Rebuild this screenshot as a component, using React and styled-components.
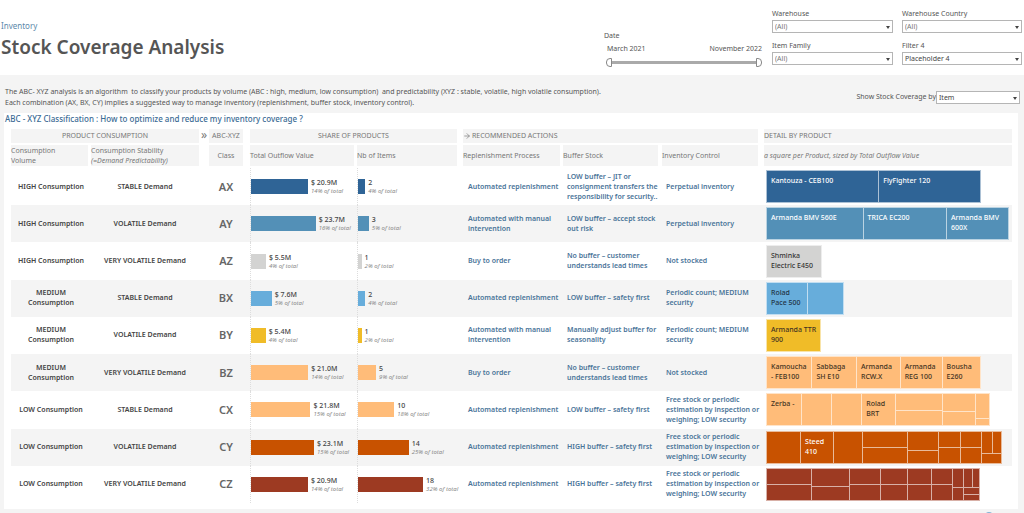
import React, { useState } from "react";
import styled, { createGlobalStyle } from "styled-components";
import { ArrowRight } from "lucide-react";

const GlobalStyle = createGlobalStyle`
  *, *::before, *::after { box-sizing: border-box; }
  body {
    margin: 0;
    background: #f4f4f4;
    color: #555;
    font-family: "Noto Sans", "Open Sans", sans-serif;
    font-size: 7px;
    line-height: 10px;
  }
`;

const Header = styled.header`
  display: flex;
  justify-content: space-between;
  height: 75px;
  padding-right: 2px;
  background: #fff;
`;

const Heading = styled.div`
  padding: 20px 0 0 1px;
`;

const Section = styled.a`
  display: block;
  color: #5c89aa;
  font-size: 8px;
  line-height: 12px;
  text-decoration: none;
`;

const Title = styled.h1`
  margin: 3px 0 0;
  color: #555;
  font-size: 19px;
  font-weight: 600;
  line-height: 24px;
  white-space: nowrap;
`;

const Filters = styled.div`
  display: flex;
  gap: 10px;
`;

const DateRange = styled.fieldset`
  width: 158px;
  margin: 0;
  padding: 30px 0 0;
  border: 0;
`;

const Legend = styled.div`
  line-height: 12px;
`;

const RangeEnds = styled.div`
  display: flex;
  justify-content: space-between;
  padding: 1px 0 0 3px;
  line-height: 12px;
`;

const Slider = styled.div`
  position: relative;
  height: 9px;
  margin: 3px 0 0 2px;
  background: linear-gradient(#aaa, #aaa) center / 144px 3px no-repeat;
`;

const Handle = styled.input`
  position: absolute;
  inset: 0;
  width: 100%;
  height: 9px;
  margin: 0;
  appearance: none;
  background: none;
  pointer-events: none;
  &::-webkit-slider-thumb {
    appearance: none;
    width: 6px;
    height: 9px;
    border: 1px solid #888;
    border-radius: ${(p) => (p.$side === "start" ? "4px 0 0 4px" : "0 4px 4px 0")};
    background: #fff;
    pointer-events: auto;
  }
`;

const FilterGrid = styled.div`
  display: grid;
  grid-template-columns: 121px 120px;
  gap: 7px 9px;
  align-content: start;
  padding-top: 8px;
`;

const Field = styled.label`
  display: flex;
  flex-direction: ${(p) => (p.$inline ? "row" : "column")};
  align-items: ${(p) => (p.$inline ? "center" : "stretch")};
  line-height: 12px;
  white-space: nowrap;
`;

const SelectBox = styled.span`
  position: relative;
  display: block;
  width: ${(p) => p.$width || "100%"};
  &::after {
    content: "";
    position: absolute;
    top: 6px;
    right: 3px;
    border: 2px solid transparent;
    border-top: 3px solid #444;
    border-bottom: 0;
    pointer-events: none;
  }
`;

const Select = styled.select`
  display: block;
  width: 100%;
  height: 13px;
  padding: 0 2px;
  appearance: none;
  border: 1px solid #b5b5b5;
  border-radius: 0;
  background: #fff;
  color: ${(p) => (p.$muted ? "#777" : "#444")};
  font: inherit;
  line-height: 11px;
`;

const Intro = styled.section`
  display: flex;
  justify-content: space-between;
  align-items: center;
  height: 38px;
  padding: 6px 4px 0 5px;
`;

const IntroText = styled.p`
  margin: 0;
  line-height: 11px;
`;

const Panel = styled.main`
  margin: 0 6px 0 4px;
  padding: 0 6px 6px 7px;
  background: #fff;
`;

const PanelTitle = styled.h2`
  margin: 0 0 0 -6px;
  color: #3c6c95;
  font-size: 8px;
  font-weight: 500;
  line-height: 12px;
  padding-bottom: 4px;
`;

const Table = styled.table`
  width: 100%;
  height: 374px;
  table-layout: fixed;
  border-collapse: separate;
  border-spacing: 0;
`;

const HeadCell = styled.th`
  height: ${(p) => (p.$group ? 16 : 23)}px;
  padding: 0;
  border: 0 solid #fff;
  border-bottom-width: 2px;
  border-right-width: ${(p) => p.$gap || 0}px;
  background: ${(p) => (p.$blank ? "#fff" : "#f4f4f4")};
  color: #777;
  font-weight: 400;
  text-align: ${(p) => p.$align || "left"};
  white-space: nowrap;
`;

const Chevrons = styled.span`
  font-size: 12px;
`;

const WithIcon = styled.span`
  display: flex;
  align-items: center;
  gap: 1px;
`;

const Row = styled.tr`
  background: ${(p) => (p.$striped ? "#f4f4f4" : "#fff")};
`;

const Cell = styled.td`
  padding: 0 0 0 ${(p) => p.$indent || 0}px;
  color: #444;
  font-weight: 600;
  text-align: ${(p) => p.$align || "left"};
`;

const ActionCell = styled(Cell)`
  color: #4a7499;
  white-space: nowrap;
`;

const ClassCell = styled.th`
  padding: 0 7px 0 0;
  color: #666;
  font-size: 11px;
  font-weight: 600;
`;

const BarCell = styled.td`
  height: 1px;
  padding: 0;
`;

const BarTrack = styled.div`
  display: flex;
  align-items: center;
  gap: 3px;
  height: 100%;
  border-left: 1px dotted #ddd;
`;

const Bar = styled.div`
  flex: none;
  height: 15px;
  background: ${(p) => p.$color};
`;

const BarLabel = styled.div`
  color: #444;
  font-weight: 500;
  line-height: 9px;
  white-space: nowrap;
`;

const Share = styled.em`
  display: block;
  color: #888;
  font-size: 6px;
  font-weight: 400;
  line-height: 8px;
`;

const TreeMap = styled.div`
  display: flex;
  gap: 1px;
  height: 33px;
  padding: 1px;
  background: color-mix(in srgb, ${(p) => p.$color} 40%, white);
`;

const Group = styled.div`
  display: flex;
  flex-basis: 0;
  flex-direction: ${(p) => p.$dir};
  gap: 1px;
  min-width: 0;
  min-height: 0;
`;

const Tile = styled.div`
  flex-basis: 0;
  min-width: 0;
  min-height: 0;
  overflow: hidden;
  padding: ${(p) => (p.$labelled ? "5px 0 0 4px" : "0")};
  background: ${(p) => p.$color};
  color: ${(p) => p.$ink};
  font-weight: 500;
  white-space: pre;
`;

const Footer = styled.footer`
  display: flex;
  justify-content: flex-end;
  height: 4px;
  padding: 3px 30px 0 0;
  overflow: hidden;
`;

const leaf = (size, label) => ({ size, label });
const stack = (size, ...items) => ({ size, dir: "column", items });
const line = (size, ...items) => ({ size, dir: "row", items });
const halves = (size, top) => stack(size, leaf(top), leaf(100 - top));

const FREE = "Free stock or periodic\nestimation by inspection or\nweighing; LOW security";
const AUTO = "Automated replenishment";
const MANUAL = "Automated with manual\nintervention";
const NO_BUFFER = "No buffer – customer\nunderstands lead times";
const PERIODIC = "Periodic count; MEDIUM\nsecurity";

const ROWS = [
  { cls: "AX", vol: "HIGH Consumption", dem: "STABLE Demand", value: 20.9, vs: 14, items: 2, is: 4, color: "#2f6496", ink: "#fff",
    actions: [AUTO, "LOW buffer – JIT or\nconsignment transfers the\nresponsibility for security..", "Perpetual inventory"],
    tiles: [leaf(113, "Kantouza - CEB100"), leaf(102, "FlyFighter 120")] },
  { cls: "AY", vol: "HIGH Consumption", dem: "VOLATILE Demand", value: 23.7, vs: 16, items: 3, is: 5, color: "#5390b7", ink: "#fff",
    actions: [MANUAL, "LOW buffer – accept stock\nout risk", "Perpetual inventory"],
    tiles: [leaf(98, "Armanda BMV 560E"), leaf(84, "TRICA EC200"), leaf(61, "Armanda BMV\n600X")] },
  { cls: "AZ", vol: "HIGH Consumption", dem: "VERY VOLATILE Demand", value: 5.5, vs: 4, items: 1, is: 2, color: "#d3d3d2", ink: "#333",
    actions: ["Buy to order", NO_BUFFER, "Not stocked"],
    tiles: [leaf(56, "Shminka\nElectric E450")] },
  { cls: "BX", vol: "MEDIUM\nConsumption", dem: "STABLE Demand", value: 7.6, vs: 5, items: 2, is: 4, color: "#67addb", ink: "#234",
    actions: [AUTO, "LOW buffer – safety first", PERIODIC],
    tiles: [leaf(39, "Rolad\nPace 500"), leaf(39)] },
  { cls: "BY", vol: "MEDIUM\nConsumption", dem: "VOLATILE Demand", value: 5.4, vs: 4, items: 1, is: 2, color: "#f0bc28", ink: "#432",
    actions: [MANUAL, "Manually adjust buffer for\nseasonality", PERIODIC],
    tiles: [leaf(55, "Armanda TTR\n900")] },
  { cls: "BZ", vol: "MEDIUM\nConsumption", dem: "VERY VOLATILE Demand", value: 21.0, vs: 14, items: 5, is: 9, color: "#ffbc79", ink: "#432",
    actions: ["Buy to order", NO_BUFFER, "Not stocked"],
    tiles: [leaf(46, "Kamoucha\n- FEB100"), leaf(45, "Sabbaga\nSH E10"), leaf(44, "Armanda\nRCW.X"), leaf(42, "Armanda\nREG 100"), leaf(38, "Bousha\nE260")] },
  { cls: "CX", vol: "LOW Consumption", dem: "STABLE Demand", value: 21.8, vs: 15, items: 10, is: 18, color: "#ffbc79", ink: "#432",
    actions: [AUTO, "LOW buffer – safety first", FREE],
    tiles: [leaf(32, "Zerba -"), leaf(32), leaf(31), leaf(31, "Rolad\nBRT"), halves(50, 51), halves(34, 54), halves(14, 77)] },
  { cls: "CY", vol: "LOW Consumption", dem: "VOLATILE Demand", value: 23.1, vs: 15, items: 14, is: 25, color: "#c85200", ink: "#fff",
    actions: [AUTO, "HIGH buffer – safety first", FREE],
    tiles: [leaf(35), leaf(30, "Steed\n410"), leaf(29), halves(47, 51), halves(31, 61), halves(23, 51), halves(21, 51), stack(20, line(72, leaf(11), leaf(9)), leaf(28))] },
  { cls: "CZ", vol: "LOW Consumption", dem: "VERY VOLATILE Demand", value: 20.9, vs: 14, items: 18, is: 32, color: "#9d3a22", ink: "#fff",
    actions: [AUTO, "HIGH buffer – safety first", FREE],
    tiles: [halves(46, 51), halves(38, 57), halves(31, 51), halves(27, 51), halves(24, 51), halves(21, 51),
      stack(27, line(62, leaf(11), leaf(9), leaf(7)), line(38, leaf(11), stack(17, leaf(1), leaf(1))))] },
];

const COLUMNS = [80, 108, 10, 41, 107, 106, 100, 99, 102, 248];
const INDENTS = [5, 4, 4];

const Lines = ({ text }) =>
  text.split("\n").map((part, i) => (
    <React.Fragment key={i}>
      {i > 0 && <br />}
      {part}
    </React.Fragment>
  ));

function TreeNode({ node, color, ink }) {
  if (node.items) {
    return (
      <Group $dir={node.dir} style={{ flexGrow: node.size }}>
        {node.items.map((child, i) => (
          <TreeNode key={i} node={child} color={color} ink={ink} />
        ))}
      </Group>
    );
  }
  return (
    <Tile $color={color} $ink={ink} $labelled={!!node.label} style={{ flexGrow: node.size }}>
      {node.label}
    </Tile>
  );
}

function ShareBar({ width, color, label, share }) {
  return (
    <BarTrack>
      <Bar $color={color} style={{ width: `${width}%` }} />
      <BarLabel>
        {label}
        <Share>{share}% of total</Share>
      </BarLabel>
    </BarTrack>
  );
}

function Filter({ label, options, inline, width, muted }) {
  return (
    <Field $inline={inline}>
      {label}
      <SelectBox $width={width}>
        <Select $muted={muted}>
          {options.map((o) => (
            <option key={o}>{o}</option>
          ))}
        </Select>
      </SelectBox>
    </Field>
  );
}

export default function App() {
  const [from, setFrom] = useState(0);
  const [to, setTo] = useState(20);
  return (
    <>
      <GlobalStyle />
      <Header>
        <Heading>
          <Section href="#inventory">Inventory</Section>
          <Title>Stock Coverage Analysis</Title>
        </Heading>
        <Filters>
          <DateRange aria-label="Date">
            <Legend>Date</Legend>
            <RangeEnds>
              <span>March 2021</span>
              <span>November 2022</span>
            </RangeEnds>
            <Slider>
              <Handle type="range" aria-label="From" min="0" max="20" value={from} $side="start" onChange={(e) => setFrom(Math.min(+e.target.value, to))} />
              <Handle type="range" aria-label="To" min="0" max="20" value={to} $side="end" onChange={(e) => setTo(Math.max(+e.target.value, from))} />
            </Slider>
          </DateRange>
          <FilterGrid>
            <Filter label="Warehouse" options={["(All)"]} muted />
            <Filter label="Warehouse Country" options={["(All)"]} muted />
            <Filter label="Item Family" options={["(All)"]} muted />
            <Filter label="Filter 4" options={["Placeholder 4"]} />
          </FilterGrid>
        </Filters>
      </Header>
      <Intro>
        <IntroText>
          The ABC- XYZ analysis is an algorithm &nbsp;to classify your products by volume (ABC : high, medium, low consumption) &nbsp;and predictability (XYZ : stable, volatile, high volatile consumption).
          <br />
          Each combination (AX, BX, CY) implies a suggested way to manage inventory (replenishment, buffer stock, inventory control).
        </IntroText>
        <Filter label="Show Stock Coverage by" options={["Item"]} inline width="84px" />
      </Intro>
      <Panel>
        <PanelTitle>ABC - XYZ Classification : How to optimize and reduce my inventory coverage ?</PanelTitle>
        <Table>
          <colgroup>
            {COLUMNS.map((w, i) => (
              <col key={i} style={{ width: w }} />
            ))}
          </colgroup>
          <thead>
            <tr>
              <HeadCell $group colSpan={2} $align="center">PRODUCT CONSUMPTION</HeadCell>
              <HeadCell $group $blank $align="center"><Chevrons>»</Chevrons></HeadCell>
              <HeadCell $group $gap={7} $align="center">ABC-XYZ</HeadCell>
              <HeadCell $group colSpan={2} $gap={6} $align="center">SHARE OF PRODUCTS</HeadCell>
              <HeadCell $group colSpan={3} $gap={6}><WithIcon><ArrowRight size={8} aria-hidden="true" />RECOMMENDED ACTIONS</WithIcon></HeadCell>
              <HeadCell $group>DETAIL BY PRODUCT</HeadCell>
            </tr>
            <tr>
              <HeadCell $gap={3}>Consumption<br />Volume</HeadCell>
              <HeadCell>Consumption Stability<br /><em>(=Demand Predictability)</em></HeadCell>
              <HeadCell $blank />
              <HeadCell $gap={7} $align="center">Class</HeadCell>
              <HeadCell $gap={3}>Total Outflow Value</HeadCell>
              <HeadCell $gap={6}>Nb of Items</HeadCell>
              <HeadCell $gap={3}>Replenishment Process</HeadCell>
              <HeadCell $gap={4}>Buffer Stock</HeadCell>
              <HeadCell $gap={6}>Inventory Control</HeadCell>
              <HeadCell><em>a square per Product, sized by Total Outflow Value</em></HeadCell>
            </tr>
          </thead>
          <tbody>
            {ROWS.map((r, i) => (
              <Row key={r.cls} $striped={i % 2 === 1}>
                <Cell $align="center"><Lines text={r.vol} /></Cell>
                <Cell $align="center">{r.dem}</Cell>
                <Cell />
                <ClassCell scope="row">{r.cls}</ClassCell>
                <BarCell>
                  <ShareBar width={(r.value / 23.7) * 61} color={r.color} label={`$ ${r.value.toFixed(1)}M`} share={r.vs} />
                </BarCell>
                <BarCell>
                  <ShareBar width={(r.items / 18) * 62} color={r.color} label={r.items} share={r.is} />
                </BarCell>
                {r.actions.map((a, k) => (
                  <ActionCell key={k} $indent={INDENTS[k]}><Lines text={a} /></ActionCell>
                ))}
                <Cell $indent={2}>
                  <TreeMap $color={r.color} style={{ width: `${(r.tiles.reduce((s, t) => s + t.size, 0) / 246) * 100}%` }}>
                    {r.tiles.map((t, k) => (
                      <TreeNode key={k} node={t} color={r.color} ink={r.ink} />
                    ))}
                  </TreeMap>
                </Cell>
              </Row>
            ))}
          </tbody>
        </Table>
      </Panel>
      <Footer>
        <svg width="10" height="10" viewBox="0 0 10 10" aria-hidden="true">
          <circle cx="5" cy="5" r="5" fill="#7fb2d6" />
        </svg>
      </Footer>
    </>
  );
}
